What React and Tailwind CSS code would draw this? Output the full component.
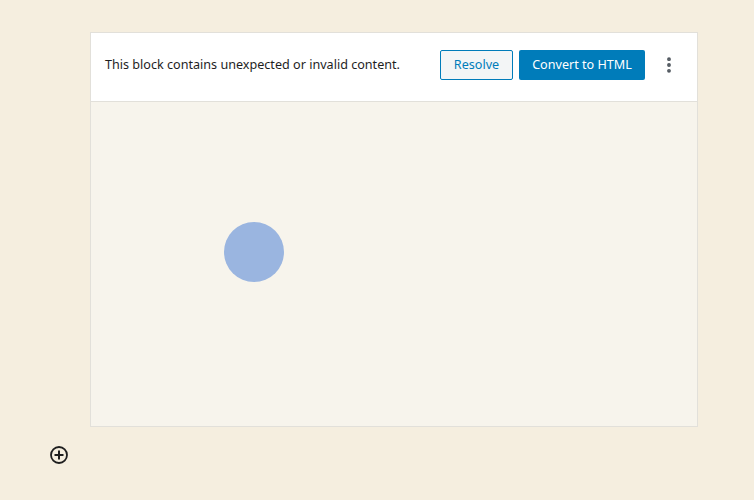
import { MoreVertical } from 'lucide-react';

export default function App() {
  return (
    <div
      className="min-h-[500px] w-full bg-[#f5eedf] pt-8 pl-[90px] pr-[56px]"
      style={{ fontFamily: '"Noto Sans", "Open Sans", sans-serif' }}
    >
      {/* Invalid block */}
      <div className="border border-[#e2e0da] w-[608px]">
        <div className="h-[69px] bg-white border-b border-[#e2e0da] flex items-center pl-[14px] pr-[16px] pb-[4px]">
          <p className="text-[12.6px] text-[#1e1e1e] flex-1">
            This block contains unexpected or invalid content.
          </p>
          <button className="h-[30px] w-[73px] rounded-[2px] border border-[#007cba] bg-[#f3f5f6] text-[12.6px] text-[#007cba]">
            Resolve
          </button>
          <button className="ml-[6px] h-[30px] w-[126px] rounded-[2px] bg-[#007cba] text-[12.6px] text-white">
            Convert to HTML
          </button>
          <button className="ml-[12px] w-[24px] h-[24px] flex items-center justify-center text-[#50575e]">
            <MoreVertical size={20} strokeWidth={2.6} />
          </button>
        </div>
        <div className="h-[324px] bg-[#f7f4ec] pt-[120px] pl-[133px]">
          <div className="w-[60px] h-[60px] rounded-full bg-[#9ab5e0]" />
        </div>
      </div>

      <div className="mt-[18px] -ml-[41px]">
        <svg width="20" height="20" viewBox="0 0 20 20">
          <circle cx="10" cy="10" r="8" fill="none" stroke="#1e1e1e" strokeWidth="1.8" />
          <path d="M10 5.5v9M5.5 10h9" stroke="#1e1e1e" strokeWidth="2" />
        </svg>
      </div>
    </div>
  );
}
